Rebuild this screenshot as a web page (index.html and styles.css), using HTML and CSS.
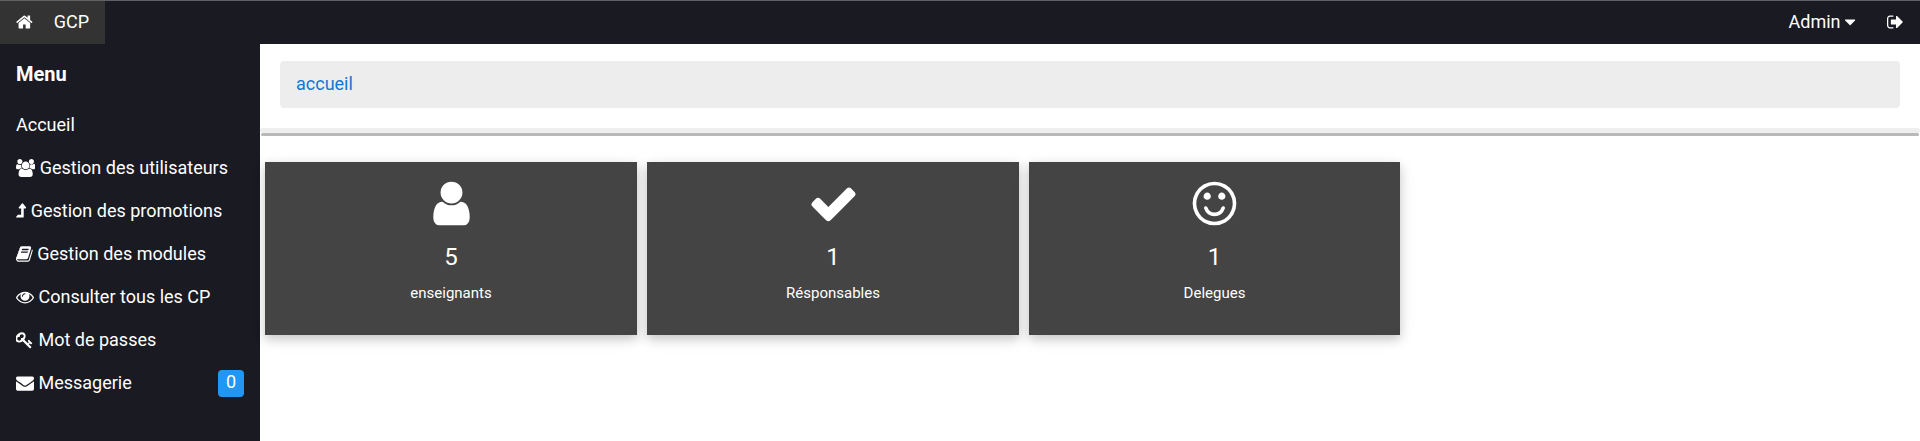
FILE: index.html
```html
<!DOCTYPE html>
<html lang="fr">
<head>
<meta charset="utf-8">
<title>GCP</title>
<link rel="stylesheet" href="styles.css">
</head>
<body>
<header class="topbar">
  <a class="brand"><svg class="icon" viewBox="64 0 1664 1792"><path d="M1472 992v480q0 26-19 45t-45 19h-384v-384h-256v384h-384q-26 0-45-19t-19-45v-480q0-1 .5-3t.5-3l575-474 575 474q1 2 1 6zm223-69l-62 74q-8 9-21 11h-3q-13 0-21-7l-692-577-692 577q-12 8-24 7-13-2-21-11l-62-74q-8-10-7-23.5t11-21.5l719-599q32-26 76-26t76 26l244 204v-195q0-14 9-23t23-9h192q14 0 23 9t9 23v408l219 182q10 8 11 21.5t-7 23.5z"/></svg><span class="brand-name">GCP</span></a>
  <nav class="account">
    <a class="link">Admin <svg class="icon" viewBox="384 0 1024 1792"><path d="M1408 704q0 26-19 45l-448 448q-19 19-45 19t-45-19l-448-448q-19-19-19-45t19-45 45-19h896q26 0 45 19t19 45z"/></svg></a>
    <a class="link"><svg class="icon" viewBox="64 0 1664 1792"><path d="M704 1440q0 4 1 20t.5 26.5-3 23.5-10 19.5-20.5 6.5h-320q-119 0-203.5-84.5t-84.5-203.5v-704q0-119 84.5-203.5t203.5-84.5h320q13 0 22.5 9.5t9.5 22.5q0 4 1 20t.5 26.5-3 23.5-10 19.5-20.5 6.5h-320q-66 0-113 47t-47 113v704q0 66 47 113t113 47h312l11.5 1 11.5 3 8 5.500 7 9 2 13.500zm928-544q0 26-19 45l-544 544q-19 19-45 19t-45-19-19-45v-288h-448q-26 0-45-19t-19-45v-384q0-26 19-45t45-19h448v-288q0-26 19-45t45-19 45 19l544 544q19 19 19 45z"/></svg></a>
  </nav>
</header>
<div class="layout">
  <aside class="sidebar">
    <h4 class="menu-title">Menu</h4>
    <a class="item">Accueil</a>
    <a class="item"><svg class="icon" viewBox="0 0 1920 1792"><path d="M593 896q-162 5-265 128h-134q-82 0-138-40.500t-56-118.500q0-353 124-353 6 0 43.500 21t97.500 42.500 119 21.500q67 0 133-23-5 37-5 66 0 159 81 294zm1071 637q0 120-73 189.500t-194 69.500h-874q-121 0-194-69.500t-73-189.500q0-53 3.500-103.500t14-109 26.500-108.500 43-97.500 62-81 85.500-53.500 111.500-20q10 0 43 21.500t73 48 107 48 135 21.500 135-21.500 107-48 73-48 43-21.500q61 0 111.500 20t85.500 53.500 62 81 43 97.500 26.500 108.500 14 109 3.500 103.500zm-1024-1277q0 106-75 181t-181 75-181-75-75-181 75-181 181-75 181 75 75 181zm704 384q0 159-112.500 271.500t-271.500 112.500-271.500-112.500-112.500-271.500 112.500-271.500 271.500-112.500 271.500 112.500 112.500 271.500zm576 225q0 78-56 118.500t-138 40.500h-134q-103-123-265-128 81-135 81-294 0-29-5-66 66 23 133 23 59 0 119-21.500t97.500-42.500 43.500-21q124 0 124 353zm-128-609q0 106-75 181t-181 75-181-75-75-181 75-181 181-75 181 75 75 181z"/></svg> Gestion des utilisateurs</a>
    <a class="item"><svg class="icon" viewBox="0 0 1024 1792"><path d="M1018 603q-18 37-58 37h-192v864q0 14-9 23t-23 9h-704q-21 0-29-18-8-20 4-35l160-192q9-11 25-11h320v-640h-192q-40 0-58-37-17-37 9-68l320-384q18-22 49-22t49 22l320 384q27 32 9 68z"/></svg> Gestion des promotions</a>
    <a class="item"><svg class="icon" viewBox="64 0 1664 1792"><path d="M1703 478q40 57 18 129l-275 906q-19 64-76.500 107.500t-122.500 43.500h-923q-77 0-148.500-53.500t-99.500-131.500q-24-67-2-127 0-4 3-27t4-37q1-8-3-21.500t-3-19.500q2-11 8-21t16.500-23.500 16.500-23.500q23-38 45-91.500t30-91.500q3-10 .5-30t-.5-28q3-11 17-28t17-23q21-36 42-92t25-90q1-9-2.500-32t.5-28q4-13 22-30.500t22-22.500q19-26 42.500-84.500t27.500-96.500q1-8-3-25.500t-2-26.500q2-8 9-18t18-23 17-21q8-12 16.500-30.500t15-35 16-36 19.500-32 26.500-23.500 36-11.500 47.500 5.500l-1 3q38-9 51-9h761q74 0 114 56t18 130l-274 906q-36 119-71.500 153.500t-128.500 34.500h-869q-27 0-38 15-11 16-1 43 24 70 144 70h923q29 0 56-15.500t35-41.500l300-987q7-22 5-57 38 15 59 43zm-1064 2q-4 13 2 22.500t20 9.500h608q13 0 25.500-9.500t16.500-22.500l21-64q4-13-2-22.500t-20-9.500h-608q-13 0-25.500 9.500t-16.500 22.500zm-83 256q-4 13 2 22.500t20 9.500h608q13 0 25.500-9.500t16.500-22.500l21-64q4-13-2-22.500t-20-9.500h-608q-13 0-25.500 9.500t-16.500 22.500z"/></svg> Gestion des modules</a>
    <a class="item"><svg class="icon" viewBox="0 0 1792 1792"><path d="M1664 960q-152-236-381-353 61 104 61 225 0 185-131.500 316.500t-316.500 131.500-316.500-131.500-131.500-316.500q0-121 61-225-229 117-381 353 133 205 333.500 326.500t434.500 121.500 434.500-121.500 333.500-326.500zm-720-384q0-20-14-34t-34-14q-125 0-214.500 89.500t-89.500 214.500q0 20 14 34t34 14 34-14 14-34q0-86 61-147t147-61q20 0 34-14t14-34zm848 384q0 34-20 69-140 230-376.500 368.500t-499.500 138.500-499.500-139-376.500-368q-20-35-20-69t20-69q140-229 376.500-368t499.500-139 499.500 139 376.500 368q20 35 20 69z"/></svg> Consulter tous les CP</a>
    <a class="item"><svg class="icon" viewBox="64 0 1792 1792"><path d="M832 512q0-80-56-136t-136-56-136 56-56 136q0 42 19 83-41-19-83-19-80 0-136 56t-56 136 56 136 136 56 136-56 56-136q0-42-19-83 41 19 83 19 80 0 136-56t56-136zm851 704q0 17-49 66t-66 49q-9 0-28.500-16t-36.500-33-38.500-40-24.500-26l-96 96 220 220q28 28 28 68 0 42-39 81t-81 39q-40 0-68-28l-671-671q-176 131-365 131-163 0-265.500-102.500t-102.500-265.500q0-160 95-313t248-248 313-95q163 0 265.500 102.500t102.500 265.500q0 189-131 365l355 355 96-96q-3-3-26-24.500t-40-38.500-33-36.500-16-28.500q0-17 49-66t66-49q13 0 23 10 6 6 46 44.500t82 79.500 86.500 86 73 78 28.500 41z"/></svg> Mot de passes</a>
    <a class="item item-badge"><span><svg class="icon" viewBox="0 0 1792 1792"><path d="M1792 710v794q0 66-47 113t-113 47h-1472q-66 0-113-47t-47-113v-794q44 49 101 87 362 246 497 345 57 42 92.500 65.500t94.500 48 110 24.500h2q51 0 110-24.500t94.500-48 92.500-65.500q170-123 498-345 57-39 100-87zm0-294q0 79-49 151t-122 123q-376 261-468 325-10 7-42.500 31t-54 38.500-52 32.500-57.500 27-50 9h-2q-23 0-50-9t-57.500-27-52-32.500-54-38.500-42.500-31q-91-64-262-182.500t-205-142.500q-62-42-117-115.500t-55-136.500q0-78 41.500-130t118.500-52h1472q65 0 112.500 47t47.500 113z"/></svg> Messagerie</span><span class="badge">0</span></a>
  </aside>
  <main class="content">
    <div class="breadcrumb"><a class="crumb">accueil</a></div>
    <div class="divider"></div>
    <section class="cards">
      <article class="card">
        <svg class="card-icon" viewBox="0 0 1792 1792"><path d="M1536 1399q0 109-62.500 187t-150.500 78h-854q-88 0-150.500-78t-62.500-187q0-85 8.500-160.500t31.500-152 58.500-131 94-89 134.500-34.500q131 128 313 128t313-128q76 0 134.500 34.500t94 89 58.500 131 31.500 152 8.500 160.500zm-256-887q0 159-112.500 271.500t-271.500 112.500-271.500-112.500-112.500-271.500 112.500-271.500 271.500-112.500 271.500 112.500 112.500 271.500z"/></svg>
        <div class="count">5</div>
        <div class="label">enseignants</div>
      </article>
      <article class="card">
        <svg class="card-icon" viewBox="0 0 1792 1792"><path d="M1671 566q0 40-28 68l-724 724-136 136q-28 28-68 28t-68-28l-136-136-362-362q-28-28-28-68t28-68l136-136q28-28 68-28t68 28l294 295 656-657q28-28 68-28t68 28l136 136q28 28 28 68z"/></svg>
        <div class="count">1</div>
        <div class="label">Résponsables</div>
      </article>
      <article class="card">
        <svg class="card-icon" viewBox="0 0 1792 1792"><path d="M1262 1075q-37 121-138 195t-228 74-228-74-138-195q-8-25 4-48.500t38-31.500q25-8 48.500 4t31.500 38q25 80 92.500 129.500t151.500 49.500 151.500-49.500 92.500-129.500q8-26 32-38t49-4 37 31.500 4 48.500zm-494-435q0 53-37.500 90.500t-90.500 37.500-90.500-37.500-37.500-90.500 37.500-90.500 90.500-37.500 90.500 37.500 37.500 90.500zm512 0q0 53-37.500 90.500t-90.500 37.500-90.500-37.500-37.500-90.500 37.500-90.500 90.500-37.500 90.500 37.500 37.500 90.500zm256 256q0-130-51-248.500t-136.500-204-204-136.500-248.500-51-248.500 51-204 136.500-136.500 204-51 248.500 51 248.500 136.500 204 204 136.500 248.500 51 248.500-51 204-136.500 136.500-204 51-248.500zm128 0q0 209-103 385.500t-279.500 279.500-385.500 103-385.500-103-279.500-279.500-103-385.500 103-385.500 279.500-279.500 385.500-103 385.500 103 279.500 279.500 103 385.500z"/></svg>
        <div class="count">1</div>
        <div class="label">Delegues</div>
      </article>
    </section>
  </main>
</div>
</body>
</html>
```
FILE: styles.css
```css
* { box-sizing: border-box; }

body {
  margin: 0;
  height: 441px;
  display: flex;
  flex-direction: column;
  overflow: hidden;
  background: #fff;
  color: #fff;
  font: 18px/27px Roboto, sans-serif;
}

.icon {
  height: 18px;
  width: auto;
  fill: currentColor;
  vertical-align: -2.6px;
}

.topbar {
  height: 44px;
  flex: none;
  display: flex;
  justify-content: space-between;
  background: #1a1a23;
  border-top: 1px solid #5f6165;
}

.brand {
  display: flex;
  align-items: center;
  width: 105px;
  padding: 0 0 2px 16px;
  gap: 21px;
  background: #333;
}

.account { display: flex; }

.link { padding: 7px 16px 9px; }

.layout {
  flex: 1;
  display: flex;
}

.sidebar {
  width: 260px;
  flex: none;
  background: #1a1a23;
}

.menu-title {
  margin: 0;
  padding: 15px 16px 16px;
  font-size: 20px;
  line-height: 30px;
  font-weight: 700;
}

.item {
  display: block;
  height: 43px;
  padding: 6px 16px 8px;
  white-space: nowrap;
}

.item-badge {
  display: flex;
  justify-content: space-between;
}

.badge {
  width: 26px;
  height: 27px;
  margin-top: 1px;
  border-radius: 4px;
  background: #2196f3;
  line-height: 24px;
  text-align: center;
}

.content {
  flex: 1;
  display: flex;
  flex-direction: column;
}

.breadcrumb {
  height: 47px;
  margin: 17px 20px 20px;
  padding: 9px 16px;
  border-radius: 4px;
  background: #ededed;
}

.crumb { color: #1275d8; }

.divider {
  height: 5px;
  border-radius: 3px;
  background: #eee;
  box-shadow: 0 4px 0 -1px #b9b9b9;
}

.cards {
  display: grid;
  grid-template-columns: 372px 372px 371px;
  gap: 10px;
  padding: 29px 5px 0;
}

.card {
  height: 173px;
  padding-top: 16px;
  display: flex;
  flex-direction: column;
  align-items: center;
  background: #444;
  box-shadow: 0 4px 10px 0 rgba(0, 0, 0, .2), 0 4px 20px 0 rgba(0, 0, 0, .05);
}

.card-icon {
  width: 51px;
  height: 51px;
  fill: #fff;
}

.count {
  margin-top: 10px;
  font-size: 24px;
  line-height: 36px;
}

.label {
  margin-top: 7px;
  font-size: 15px;
  line-height: 22px;
}
```
